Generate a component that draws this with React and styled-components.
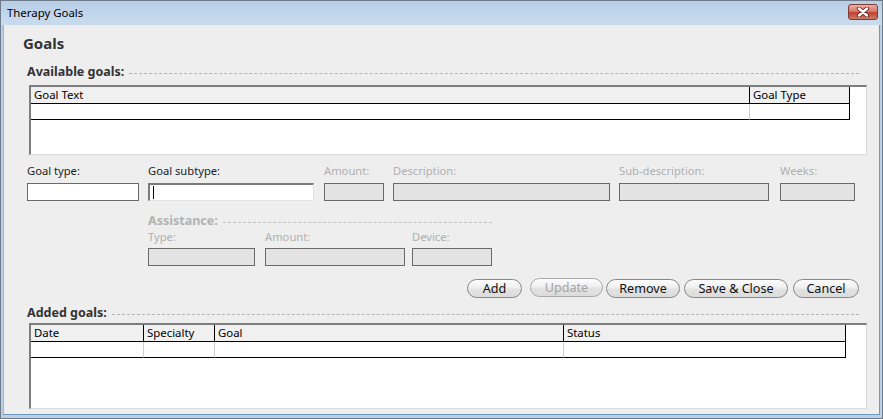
import React from "react";
import styled, { createGlobalStyle } from "styled-components";

const GlobalStyle = createGlobalStyle`
   html, body {
      margin: 0;
      padding: 0;
      background: #ffffff;
   }
   body {
      font-family: "Noto Sans", "Liberation Sans", sans-serif;
      font-size: 11.2px;
   }
`;

const Window = styled.div`
   width: 883px;
   height: 419px;
   box-sizing: border-box;
   border: 1px solid #6f7c8a;
   display: flex;
   flex-direction: column;
   background: #b9cfe7;
`;

const TitleBar = styled.div`
   height: 24px;
   flex: none;
   display: flex;
   align-items: center;
   padding: 0 4px 0 6px;
   background: linear-gradient(180deg, #b7cee7 0%, #c3d7ec 60%, #c9dbee 100%);
`;

const Title = styled.span`
   font-size: 11.4px;
   color: #000;
   margin-top: -1px;
`;

const CloseButton = styled.div`
   margin-left: auto;
   width: 30px;
   height: 16px;
   box-sizing: border-box;
   border: 1px solid #7c3a32;
   border-radius: 3px;
   background: linear-gradient(180deg, #eab0a6 0%, #d7786a 45%, #c1402f 55%, #d07a66 100%);
   display: flex;
   align-items: center;
   justify-content: center;
   margin-top: -2px;
`;

const Body = styled.div`
   flex: 1;
   display: flex;
   flex-direction: column;
   background: #eeeeee;
   margin: 0 2px 3px 2px;
   border-right: 1px solid #6e97c2;
   border-bottom: 1px solid #6e97c2;
   border-left: 1px solid #9cb7d6;
   padding: 9px 20px 0 23px;
   overflow: hidden;
`;

const Heading = styled.div`
   height: 18px;
   line-height: 18px;
   font-size: 15px;
   font-weight: bold;
   color: #333;
   margin-left: -4px;
`;

const SectionHead = styled.div`
   display: flex;
   align-items: center;
   height: 16px;
   margin-top: ${(p) => p.$mt}px;
`;

const SectionLabel = styled.span`
   font-size: 12.5px;
   font-weight: bold;
   line-height: 16px;
   color: ${(p) => (p.$disabled ? "#b2b2b2" : "#333")};
   white-space: nowrap;
`;

const Dashes = styled.div`
   flex: 1;
   height: 0;
   margin: 3px 0 0 5px;
   border-top: 1px dashed ${(p) => (p.$disabled ? "#c2c2c2" : "#b4b4b4")};
`;

const TableBox = styled.div`
   box-sizing: border-box;
   height: ${(p) => p.$h}px;
   margin: ${(p) => p.$mt}px -8px 0 2px;
   background: #fff;
   border-top: 2px solid #7d7d7d;
   border-left: 2px solid #7d7d7d;
   border-right: 1px solid #dadada;
   border-bottom: 1px solid #dadada;
`;

const Grid = styled.div`
   display: grid;
   grid-template-columns: ${(p) => p.$cols};
   width: max-content;
`;

const HeadCell = styled.div`
   height: 16px;
   line-height: 16px;
   padding-left: 3px;
   background: #f0f0f0;
   border-right: 1px solid #000;
   border-bottom: 1px solid #000;
   font-size: 11.4px;
   color: #000;
   white-space: nowrap;
   overflow: hidden;
`;

const Cell = styled.div`
   height: 15px;
   border-right: 1px solid ${(p) => (p.$last ? "#000" : "#d0d0d0")};
   border-bottom: 1px solid #000;
`;

const FormRow = styled.div`
   display: flex;
   margin-top: 8px;
`;

const Field = styled.div`
   display: flex;
   flex-direction: column;
   width: ${(p) => p.$w}px;
   margin-left: ${(p) => p.$ml || 0}px;
   flex: none;
`;

const Label = styled.label`
   height: 16px;
   line-height: 16px;
   font-size: 11.2px;
   color: ${(p) => (p.$disabled ? "#b0b0b0" : "#222")};
   white-space: nowrap;
`;

const Input = styled.div`
   box-sizing: border-box;
   height: 18px;
   margin-top: ${(p) => p.$gap}px;
   background: ${(p) => (p.$disabled ? "#e3e3e3" : "#fff")};
   border: 1px solid #6a6a6a;
   ${(p) =>
      p.$focused &&
      `border-top: 2px solid #7a7a7a;
       border-left: 2px solid #7a7a7a;
       border-right: 1px solid #e2e2e2;
       border-bottom: 1px solid #e2e2e2;
       padding: 1px 0 0 3px;`}
`;

const Caret = styled.div`
   width: 1px;
   height: 13px;
   background: #000;
`;

const Assistance = styled.div`
   display: flex;
   flex-direction: column;
   width: 344px;
   margin-left: 121px;
`;

const AssistRow = styled.div`
   display: flex;
`;

const ButtonBar = styled.div`
   display: flex;
   justify-content: flex-end;
   margin-top: 13px;
`;

const Button = styled.button`
   box-sizing: border-box;
   width: ${(p) => p.$w}px;
   height: 19px;
   margin-left: ${(p) => p.$ml}px;
   padding: 0;
   border: 1px solid ${(p) => (p.disabled ? "#a9a9a9" : "#878787")};
   border-radius: 10px;
   background: linear-gradient(180deg, #fdfdfd 0%, #efefef 45%, #e2e2e2 55%, #dcdcdc 100%);
   font-family: "Noto Sans", "Liberation Sans", sans-serif;
   font-size: 12.6px;
   line-height: 16px;
   color: ${(p) => (p.disabled ? "#a4a4a4" : "#111")};
   transform: ${(p) => (p.disabled ? "translateY(-1px)" : "none")};
`;

const CloseIcon = () => (
   <svg width="14" height="10" viewBox="0 0 14 10">
      <path d="M3 1.5 L11 8.5 M11 1.5 L3 8.5" stroke="#5e2620" strokeWidth="4.2" strokeLinecap="round" />
      <path d="M3 1.5 L11 8.5 M11 1.5 L3 8.5" stroke="#ffffff" strokeWidth="2.4" strokeLinecap="round" />
   </svg>
);

const DataTable = ({ widths, headers, height, top }) => {
   const cols = widths.map((w) => `${w}px`).join(" ");
   return (
      <TableBox $h={height} $mt={top}>
         <Grid $cols={cols}>
            {headers.map((h) => (
               <HeadCell key={h}>{h}</HeadCell>
            ))}
            {headers.map((h, i) => (
               <Cell key={h} $last={i === headers.length - 1} />
            ))}
         </Grid>
      </TableBox>
   );
};

const App = () => {
   return (
      <>
         <GlobalStyle />
         <Window>
            <TitleBar>
               <Title>Therapy Goals</Title>
               <CloseButton>
                  <CloseIcon />
               </CloseButton>
            </TitleBar>
            <Body>
               <Heading>Goals</Heading>

               <SectionHead $mt={12}>
                  <SectionLabel>Available goals:</SectionLabel>
                  <Dashes />
               </SectionHead>
               <DataTable
                  top={5}
                  height={70}
                  widths={[719, 100]}
                  headers={["Goal Text", "Goal Type"]}
               />

               <FormRow>
                  <Field $w={112}>
                     <Label>Goal type:</Label>
                     <Input $gap={4} />
                  </Field>
                  <Field $w={166} $ml={9}>
                     <Label>Goal subtype:</Label>
                     <Input $gap={4} $focused>
                        <Caret />
                     </Input>
                  </Field>
                  <Field $w={60} $ml={10}>
                     <Label $disabled>Amount:</Label>
                     <Input $gap={4} $disabled />
                  </Field>
                  <Field $w={217} $ml={9}>
                     <Label $disabled>Description:</Label>
                     <Input $gap={4} $disabled />
                  </Field>
                  <Field $w={150} $ml={9}>
                     <Label $disabled>Sub-description:</Label>
                     <Input $gap={4} $disabled />
                  </Field>
                  <Field $w={75} $ml={11}>
                     <Label $disabled>Weeks:</Label>
                     <Input $gap={4} $disabled />
                  </Field>
               </FormRow>

               <Assistance>
                  <SectionHead $mt={12}>
                     <SectionLabel $disabled>Assistance:</SectionLabel>
                     <Dashes $disabled />
                  </SectionHead>
                  <AssistRow>
                     <Field $w={107}>
                        <Label $disabled>Type:</Label>
                        <Input $gap={3} $disabled />
                     </Field>
                     <Field $w={140} $ml={10}>
                        <Label $disabled>Amount:</Label>
                        <Input $gap={3} $disabled />
                     </Field>
                     <Field $w={80} $ml={7}>
                        <Label $disabled>Device:</Label>
                        <Input $gap={3} $disabled />
                     </Field>
                  </AssistRow>
               </Assistance>

               <ButtonBar>
                  <Button $w={55} $ml={0}>Add</Button>
                  <Button $w={73} $ml={8} disabled>
                     Update
                  </Button>
                  <Button $w={74} $ml={3}>Remove</Button>
                  <Button $w={104} $ml={4}>Save &amp; Close</Button>
                  <Button $w={66} $ml={5}>Cancel</Button>
               </ButtonBar>

               <SectionHead $mt={7}>
                  <SectionLabel>Added goals:</SectionLabel>
                  <Dashes />
               </SectionHead>
               <DataTable
                  top={2}
                  height={86}
                  widths={[113, 71, 349, 282]}
                  headers={["Date", "Specialty", "Goal", "Status"]}
               />
            </Body>
         </Window>
      </>
   );
};

export default App;
